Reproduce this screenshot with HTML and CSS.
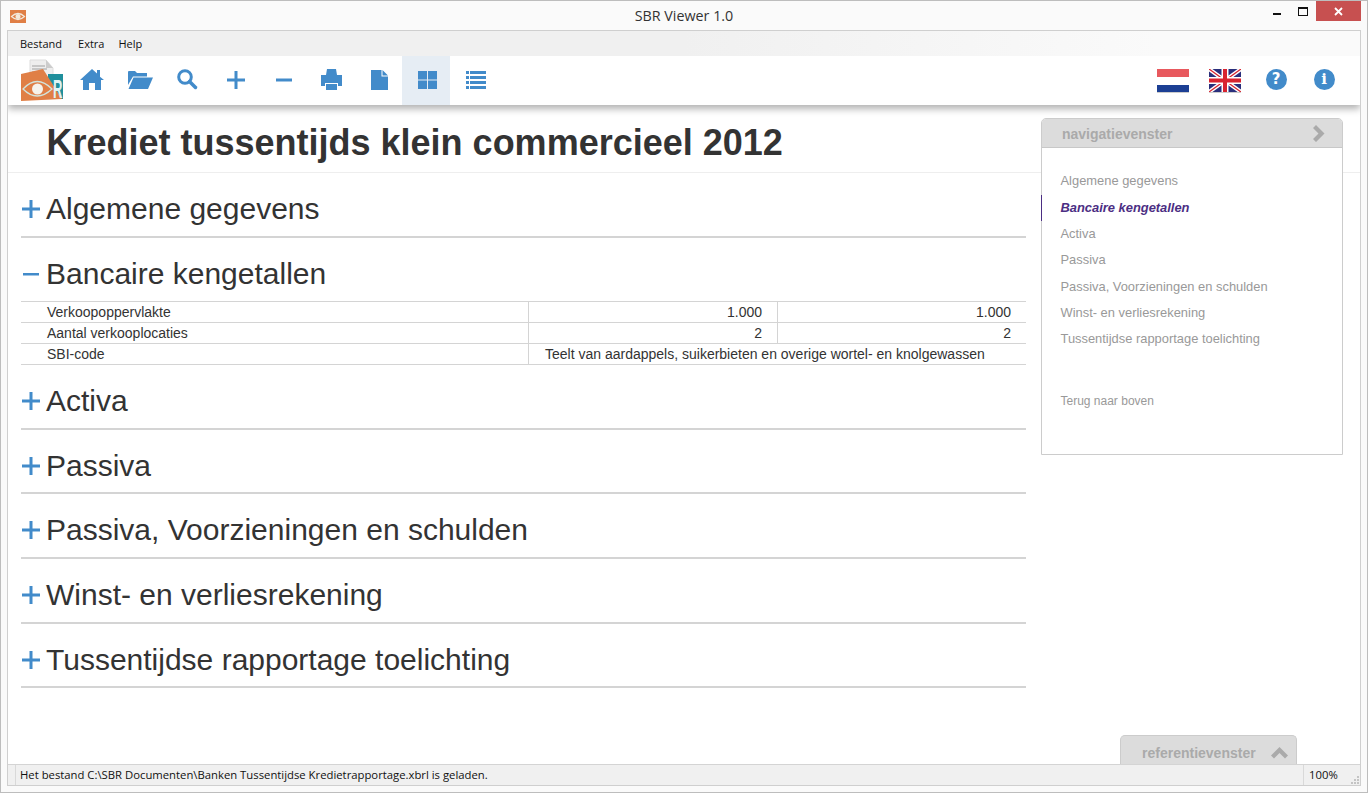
FILE: index.html
```html
<!DOCTYPE html>
<html lang="nl">

<head>
  <meta charset="UTF-8">
  <title>SBR Viewer 1.0</title>
  <link rel="stylesheet" href="styles.css">
</head>

<body>
  <div class="window">
    <header class="titlebar">
      <svg class="app-icon" width="16" height="16" viewBox="0 0 16 16">
        <path d="M0 2h16v13H0z" fill="#e07f46" />
        <path d="M1.500 8.500q6.500-6 13 0q-6.500 6-13 0z" fill="none" stroke="#f3e9dc" stroke-width="1.200" />
        <circle cx="8" cy="8.500" r="2.500" fill="#f3e9dc" />
      </svg>
      <span class="app-title">SBR Viewer 1.0</span>
      <div class="win-controls">
        <span class="win-btn"><i class="win-min"></i></span>
        <span class="win-btn"><i class="win-max"></i></span>
        <span class="win-close">
          <svg width="9" height="9" viewBox="0 0 9 9">
            <path d="M1 1l7 7M8 1L1 8" stroke="#fff" stroke-width="1.800" />
          </svg>
        </span>
      </div>
    </header>

    <div class="client">
      <nav class="menubar">
        <span>Bestand</span>
        <span>Extra</span>
        <span>Help</span>
      </nav>

      <div class="toolbar">
        <svg class="logo" width="44" height="44" viewBox="0 0 44 44">
          <path d="M10 2h16l7 8v16H10z" fill="#eee" stroke="#ddd" />
          <path d="M12 8h13M12 11h15M12 14h10" stroke="#bbb" stroke-width="1.500" />
          <path d="M26 2v8h7z" fill="#ccc" />
          <path d="M28 16h15v25H28z" fill="#1f8f9c" />
          <path d="M1 16l22-5 19 30-41 2z" fill="#e07f46" />
          <text class="logo-r" transform="translate(33 40) scale(.5 1)">R</text>
          <path d="M3 31q14-15 29 0q-15 14-29 0z" fill="none" stroke="#d2e4dc" stroke-width="1.300" />
          <circle cx="17.500" cy="31" r="5.500" fill="#f6f3ec" />
        </svg>

        <button class="tool">
          <svg width="24" height="21" viewBox="0 0 24 21"><path d="M12 0l5 4.500V1h3v6.700L24 11h-3v10h-6v-7H9v7H3V11H0z" /></svg>
        </button>
        <button class="tool">
          <svg width="26" height="19" viewBox="0 0 26 19"><path d="M1 1.500L2 1h6l2 2h10v3.500H6L1 15z M6.500 7.500H26L21 19H1.500z" /></svg>
        </button>
        <button class="tool">
          <svg width="21" height="21" viewBox="0 0 21 21"><circle cx="8" cy="8" r="6.300" fill="none" stroke="#428bca" stroke-width="3" /><path d="M12.500 12.500l6 6" stroke="#428bca" stroke-width="3.500" stroke-linecap="round" /></svg>
        </button>
        <button class="tool">
          <svg width="18" height="18" viewBox="0 0 18 18"><path d="M7.500 0h3v7.500H18v3h-7.500V18h-3v-7.500H0v-3h7.500z" /></svg>
        </button>
        <button class="tool">
          <svg width="16" height="18" viewBox="0 0 16 18"><path d="M0 7.500h16v3H0z" /></svg>
        </button>
        <button class="tool">
          <svg width="21" height="21" viewBox="0 0 21 21"><path d="M6 0h9l1 6H5z M0 6h21v11h-4v-3H4v3H0z M5 15h11v6H5z" /></svg>
        </button>
        <button class="tool">
          <svg width="17" height="20" viewBox="0 0 17 20"><path d="M0 0h10.500v6.500H17V20H0z M11.500 0L17 5.500h-5.500z" /></svg>
        </button>
        <button class="tool active">
          <svg width="19" height="18" viewBox="0 0 19 18"><path d="M0 0h9v8.500H0z M10 0h9v8.500h-9z M0 9.500h9V18H0z M10 9.500h9V18h-9z" /></svg>
        </button>
        <button class="tool">
          <svg width="20" height="18" viewBox="0 0 20 18"><path d="M0 0h3v3H0z M4 0h16v3H4z M0 5h3v3H0z M4 5h16v3H4z M0 10h3v3H0z M4 10h16v3H4z M0 15h3v3H0z M4 15h16v3H4z" /></svg>
        </button>

        <div class="toolbar-right">
          <button class="flag-btn">
            <svg width="32" height="24" viewBox="0 0 32 24">
              <path d="M0 0h32v8H0z" fill="#e8595e" />
              <path d="M0 8h32v8H0z" fill="#fff" />
              <path d="M0 16h32v7H0z" fill="#1c3f94" />
              <path d="M0 23.500h32" stroke="#ccc" />
            </svg>
          </button>
          <button class="flag-btn">
            <svg width="32" height="24" viewBox="0 0 32 24">
              <path d="M0 0h32v23H0z" fill="#2a2f7c" />
              <path d="M0 0l32 23M32 0L0 23" stroke="#fff" stroke-width="4" />
              <path d="M0 0l32 23M32 0L0 23" stroke="#d8232f" stroke-width="1.300" />
              <path d="M16 0v23M0 11.500h32" stroke="#fff" stroke-width="7" />
              <path d="M16 0v23M0 11.500h32" stroke="#d8232f" stroke-width="4" />
              <path d="M0 23.500h32" stroke="#ccc" />
            </svg>
          </button>
          <button class="tool">
            <span class="round-icon">?</span>
          </button>
          <button class="tool">
            <span class="round-icon info">i</span>
          </button>
        </div>
      </div>

      <main class="content">
        <h1 class="doc-title">Krediet tussentijds klein commercieel 2012</h1>

        <section class="section-head">
          <svg class="toggle" width="18" height="18" viewBox="0 0 18 18"><path d="M7.500 0h3v7.500H18v3h-7.500V18h-3v-7.500H0v-3h7.500z" /></svg>
          <h2>Algemene gegevens</h2>
        </section>

        <section class="section-head open">
          <svg class="toggle" width="18" height="18" viewBox="0 0 18 18"><path d="M1 8h16v2.500H1z" /></svg>
          <h2>Bancaire kengetallen</h2>
        </section>
        <table class="facts">
          <tr>
            <td class="label">Verkoopoppervlakte</td>
            <td class="num">1.000</td>
            <td class="num">1.000</td>
          </tr>
          <tr>
            <td class="label">Aantal verkooplocaties</td>
            <td class="num">2</td>
            <td class="num">2</td>
          </tr>
          <tr>
            <td class="label">SBI-code</td>
            <td class="wide" colspan="2">Teelt van aardappels, suikerbieten en overige wortel- en knolgewassen</td>
          </tr>
        </table>

        <section class="section-head">
          <svg class="toggle" width="18" height="18" viewBox="0 0 18 18"><path d="M7.500 0h3v7.500H18v3h-7.500V18h-3v-7.500H0v-3h7.500z" /></svg>
          <h2>Activa</h2>
        </section>
        <section class="section-head">
          <svg class="toggle" width="18" height="18" viewBox="0 0 18 18"><path d="M7.500 0h3v7.500H18v3h-7.500V18h-3v-7.500H0v-3h7.500z" /></svg>
          <h2>Passiva</h2>
        </section>
        <section class="section-head">
          <svg class="toggle" width="18" height="18" viewBox="0 0 18 18"><path d="M7.500 0h3v7.500H18v3h-7.500V18h-3v-7.500H0v-3h7.500z" /></svg>
          <h2>Passiva, Voorzieningen en schulden</h2>
        </section>
        <section class="section-head">
          <svg class="toggle" width="18" height="18" viewBox="0 0 18 18"><path d="M7.500 0h3v7.500H18v3h-7.500V18h-3v-7.500H0v-3h7.500z" /></svg>
          <h2>Winst- en verliesrekening</h2>
        </section>
        <section class="section-head">
          <svg class="toggle" width="18" height="18" viewBox="0 0 18 18"><path d="M7.500 0h3v7.500H18v3h-7.500V18h-3v-7.500H0v-3h7.500z" /></svg>
          <h2>Tussentijdse rapportage toelichting</h2>
        </section>

        <aside class="nav-panel">
          <div class="panel-head">
            <span>navigatievenster</span>
            <svg width="13" height="17" viewBox="0 0 13 17"><path d="M3 0l8.500 8.500L3 17 0 14l5.500-5.500L0 3z" /></svg>
          </div>
          <ul class="nav-list">
            <li>Algemene gegevens</li>
            <li class="current">Bancaire kengetallen</li>
            <li>Activa</li>
            <li>Passiva</li>
            <li>Passiva, Voorzieningen en schulden</li>
            <li>Winst- en verliesrekening</li>
            <li>Tussentijdse rapportage toelichting</li>
            <li class="to-top">Terug naar boven</li>
          </ul>
        </aside>

        <div class="ref-tab">
          <span>referentievenster</span>
          <svg width="17" height="12" viewBox="0 0 17 12"><path d="M8.500 0L17 8.500 14 11.500 8.500 6 3 11.500 0 8.500z" /></svg>
        </div>
      </main>

      <footer class="statusbar">
        <span class="status-text">Het bestand C:\SBR Documenten\Banken Tussentijdse Kredietrapportage.xbrl is geladen.</span>
        <span class="status-zoom">100%</span>
        <svg class="grip" width="9" height="9" viewBox="0 0 9 9">
          <path d="M6 0h2v2H6z M3 3h2v2H3z M6 3h2v2H6z M0 6h2v2H0z M3 6h2v2H3z M6 6h2v2H6z" fill="#c4c4c4" />
        </svg>
      </footer>
    </div>
  </div>
</body>

</html>
```

FILE: styles.css
```css
html,
body {
  margin: 0;
  padding: 0;
  background: #fff;
}

.window {
  width: 1368px;
  height: 793px;
  box-sizing: border-box;
  display: flex;
  flex-direction: column;
  padding: 0 6px 6px 6px;
  border: 1px solid #bdbdbd;
  background: #fafafa;
  font-family: "Liberation Sans", Arial, sans-serif;
  color: #333;
}

.titlebar {
  height: 29px;
  flex: none;
  display: flex;
  align-items: flex-start;
  position: relative;
}

.app-icon {
  margin: 7px 0 0 3px;
}

.app-title {
  position: absolute;
  top: 5px;
  left: 0;
  right: 0;
  text-align: center;
  font-family: "Open Sans", sans-serif;
  font-size: 14.3px;
  line-height: 20px;
  color: #333;
}

.win-controls {
  display: flex;
  margin-left: auto;
  position: relative;
}

.win-btn {
  width: 26px;
  height: 20px;
  display: flex;
  align-items: flex-start;
  justify-content: center;
}

.win-min {
  width: 8px;
  height: 2px;
  margin-top: 12px;
  background: #111;
}

.win-max {
  width: 8px;
  height: 6px;
  margin-top: 6px;
  border: 1px solid #111;
  border-top-width: 2px;
}

.win-close {
  width: 45px;
  height: 20px;
  display: flex;
  align-items: center;
  justify-content: center;
  background: #c75050;
}

.client {
  flex: 1;
  min-height: 0;
  display: flex;
  flex-direction: column;
  border: 1px solid #cfcfcf;
  background: #fff;
}

.menubar {
  height: 25px;
  flex: none;
  display: flex;
  align-items: center;
  gap: 16px;
  padding-left: 12px;
  background: linear-gradient(to right, #f0f0f0, #f0f0f0 50%, #fafafa 85%);
  font-family: "Open Sans", sans-serif;
  font-size: 11px;
  color: #111;
}

.menubar span:last-child {
  margin-left: -2px;
}

.toolbar {
  height: 49px;
  flex: none;
  box-sizing: border-box;
  display: flex;
  align-items: stretch;
  padding-left: 12px;
  background: #fff;
  box-shadow: 0 4px 7px rgba(0, 0, 0, 0.3);
  clip-path: inset(0 0 -14px 0);
  position: relative;
  z-index: 2;
}

.logo {
  align-self: center;
  width: 44px;
  height: 44px;
  margin: -1px 2px 0 0;
}

.logo-r {
  font-family: "Liberation Sans", sans-serif;
  font-size: 26px;
  font-weight: bold;
  fill: #dff3f3;
}

.tool {
  width: 48px;
  flex: none;
  display: flex;
  align-items: center;
  justify-content: center;
  padding: 0 0 2px 3px;
  border: none;
  background: none;
}

.tool svg {
  fill: #428bca;
}

.tool.active {
  background: #e6edf4;
}

.toolbar-right {
  margin-left: auto;
  display: flex;
  align-items: stretch;
  padding-right: 12px;
}

.toolbar-right .tool {
  padding-left: 0;
}

.flag-btn {
  width: 52px;
  flex: none;
  display: flex;
  align-items: center;
  justify-content: center;
  padding: 0;
  border: none;
  background: none;
}

.flag-btn + .flag-btn {
  margin-right: 1px;
}

.round-icon {
  width: 21px;
  height: 21px;
  border-radius: 50%;
  background: #428bca;
  color: #fff;
  font-family: "DejaVu Sans", sans-serif;
  font-size: 15px;
  font-weight: bold;
  line-height: 21px;
  text-align: center;
}

.round-icon.info {
  font-family: "DejaVu Serif", serif;
}

.content {
  flex: 1;
  min-height: 0;
  position: relative;
  overflow: hidden;
}

.doc-title {
  height: 68px;
  box-sizing: border-box;
  margin: 0;
  padding-left: 38.5px;
  border-bottom: 1px solid #eee;
  font-size: 36px;
  line-height: 75px;
  color: #333;
}

.section-head {
  height: 64.67px;
  box-sizing: border-box;
  margin: 0 334px 0 13px;
  display: flex;
  align-items: flex-start;
  border-bottom: 2px solid #d4d4d4;
}

.section-head.open {
  height: 63.33px;
  border-bottom: none;
}

.toggle {
  flex: none;
  margin: 27px 6px 0 1px;
  fill: #428bca;
}

.section-head h2 {
  margin: 0;
  font-size: 30px;
  font-weight: normal;
  line-height: 72.6px;
  white-space: nowrap;
  color: #333;
}

.facts {
  width: 1005px;
  margin-left: 13px;
  border-collapse: collapse;
  table-layout: fixed;
  font-size: 14px;
}

.facts td {
  height: 20px;
  padding: 0;
  border-top: 1px solid #d4d4d4;
  border-bottom: 1px solid #d4d4d4;
  line-height: 20px;
}

.facts .label {
  width: 481px;
  padding-left: 26px;
}

.facts .num {
  width: 233px;
  padding-right: 15px;
  border-left: 1px solid #d4d4d4;
  text-align: right;
}

.facts .wide {
  padding-left: 16px;
  border-left: 1px solid #d4d4d4;
}

.nav-panel {
  position: absolute;
  top: 13px;
  right: 17px;
  width: 302px;
  height: 337px;
  box-sizing: border-box;
  border: 1px solid #ccc;
  border-radius: 5px 5px 0 0;
  background: #fff;
}

.panel-head {
  height: 29px;
  box-sizing: border-box;
  display: flex;
  align-items: center;
  justify-content: space-between;
  padding: 1px 16px 0 20px;
  border-bottom: 1px solid #c8c8c8;
  border-radius: 4px 4px 0 0;
  background: #dcdcdc;
  font-size: 14px;
  font-weight: bold;
  color: #aaa;
}

.panel-head svg,
.ref-tab svg {
  fill: #aaa;
}

.nav-list {
  margin: 0;
  padding: 20.4px 0 0;
  list-style: none;
  font-size: 12.9px;
  color: #999;
}

.nav-list li {
  height: 26.35px;
  line-height: 26px;
  padding-left: 18.5px;
}

.nav-list .current {
  margin-left: -1px;
  border-left: 1px solid #4b2e83;
  font-weight: bold;
  font-style: italic;
  color: #4b2e83;
}

.nav-list .to-top {
  margin-top: 35.6px;
  font-size: 12px;
}

.ref-tab {
  position: absolute;
  bottom: 0;
  right: 63px;
  width: 177px;
  height: 29px;
  box-sizing: border-box;
  display: flex;
  align-items: center;
  justify-content: space-between;
  padding: 6px 8px 0 21px;
  border: 1px solid #ccc;
  border-bottom: none;
  border-radius: 5px 5px 0 0;
  background: #dcdcdc;
  font-size: 14px;
  font-weight: bold;
  color: #aaa;
}

.statusbar {
  height: 20px;
  flex: none;
  display: flex;
  align-items: stretch;
  border-top: 1px solid #d4d4d4;
  background: #f0f0f0;
  font-family: "Open Sans", sans-serif;
  font-size: 11.3px;
  line-height: 20px;
  color: #111;
}

.status-text {
  flex: 1;
  margin-left: 7px;
  padding-left: 4px;
  border-left: 1px solid #d9d9d9;
}

.status-zoom {
  width: 57px;
  box-sizing: border-box;
  padding-left: 5px;
  border-left: 1px solid #d9d9d9;
}

.grip {
  position: absolute;
  right: 8px;
  bottom: 8px;
}
```
